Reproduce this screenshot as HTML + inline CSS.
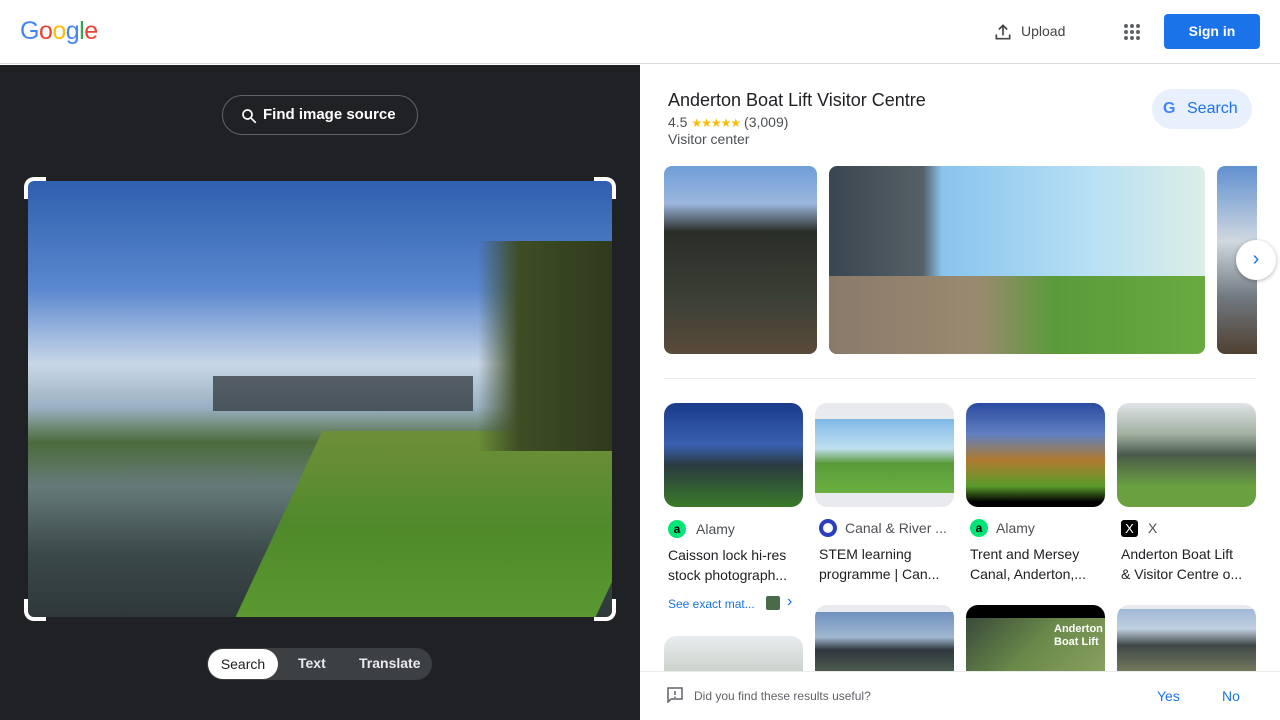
<!DOCTYPE html>
<html><head><meta charset="utf-8"><style>
*{box-sizing:border-box;margin:0;padding:0}
body{width:1280px;height:720px;overflow:hidden;font-family:"Liberation Sans",Arial,sans-serif;background:#fff;position:relative}
.a{position:absolute}
.hdr{left:0;top:0;width:1280px;height:64px;background:#fff;border-bottom:1px solid #dadce0}
.left{left:0;top:65px;width:640px;height:655px;background:#202124}
.img{border-radius:8px;overflow:hidden}
.src{font-size:14px;color:#4d5156}
.ttl{font-size:14px;color:#202124;line-height:20px}
</style></head><body>
<div class="a hdr">
 <div class="a" style="left:20px;top:17px;font-size:25px;letter-spacing:-0.5px"><span style="color:#4285f4">G</span><span style="color:#ea4335">o</span><span style="color:#fbbc05">o</span><span style="color:#4285f4">g</span><span style="color:#34a853">l</span><span style="color:#ea4335">e</span></div>
 <svg class="a" style="left:993px;top:22px" width="20" height="20" viewBox="0 0 24 24"><path d="M12 16V4M7 9l5-5 5 5M4 15v5h16v-5" stroke="#444" stroke-width="2" fill="none"/></svg>
 <div class="a" style="left:1021px;top:23px;font-size:14px;color:#444">Upload</div>
 <svg class="a" style="left:1123px;top:23px" width="18" height="18" viewBox="0 0 18 18" fill="#5f6368"><circle cx="3" cy="3" r="2"/><circle cx="9" cy="3" r="2"/><circle cx="15" cy="3" r="2"/><circle cx="3" cy="9" r="2"/><circle cx="9" cy="9" r="2"/><circle cx="15" cy="9" r="2"/><circle cx="3" cy="15" r="2"/><circle cx="9" cy="15" r="2"/><circle cx="15" cy="15" r="2"/></svg>
 <div class="a" style="left:1164px;top:14px;width:96px;height:35px;background:#1a73e8;border-radius:4px;color:#fff;font-size:14px;font-weight:bold;text-align:center;line-height:35px">Sign in</div>
</div>
<div class="a left">
 <div class="a" style="left:222px;top:30px;width:196px;height:40px;border:1px solid #5f6368;border-radius:20px;color:#fff;font-size:15px;font-weight:bold;line-height:38px;padding-left:40px">Find image source</div>
 <svg class="a" style="left:240px;top:42px" width="18" height="18" viewBox="0 0 24 24"><circle cx="10" cy="10" r="6" stroke="#fff" stroke-width="2.2" fill="none"/><path d="M15 15l6 6" stroke="#fff" stroke-width="2.2"/></svg>
 <div class="a" style="left:28px;top:116px;width:584px;height:436px;background:linear-gradient(180deg,#2f5fae 0%,#5b88cf 25%,#c9d7e8 42%,#9ab0c0 52%,#4b6b3c 60%,#667a7a 70%,#3c4a4a 85%,#2e3838 100%);overflow:hidden">
  <div class="a" style="left:250px;top:250px;width:360px;height:190px;background:linear-gradient(180deg,#6f8f3a,#4f8a2a 50%,#5a9a30);transform:skewX(-25deg)"></div>
  <div class="a" style="left:450px;top:60px;width:134px;height:210px;background:linear-gradient(90deg,rgba(60,75,35,0),#3f4d25 30%,#2f3a1c)"></div>
  <div class="a" style="left:185px;top:195px;width:260px;height:35px;background:#2a2f35;opacity:.7"></div>
 </div>
 <div class="a" style="left:24px;top:112px;width:22px;height:22px;border-left:4px solid #fff;border-top:4px solid #fff;border-top-left-radius:10px"></div>
 <div class="a" style="left:594px;top:112px;width:22px;height:22px;border-right:4px solid #fff;border-top:4px solid #fff;border-top-right-radius:10px"></div>
 <div class="a" style="left:24px;top:534px;width:22px;height:22px;border-left:4px solid #fff;border-bottom:4px solid #fff;border-bottom-left-radius:10px"></div>
 <div class="a" style="left:594px;top:534px;width:22px;height:22px;border-right:4px solid #fff;border-bottom:4px solid #fff;border-bottom-right-radius:10px"></div>
 <div class="a" style="left:207px;top:583px;width:225px;height:32px;background:#3c4043;border-radius:16px"></div>
 <div class="a" style="left:208px;top:584px;width:70px;height:30px;background:#fff;border-radius:15px;font-size:14px;color:#202124;text-align:center;line-height:30px">Search</div>
 <div class="a" style="left:298px;top:590px;font-size:14px;color:#e8eaed;font-weight:bold">Text</div>
 <div class="a" style="left:359px;top:590px;font-size:14px;color:#e8eaed;font-weight:bold">Translate</div>
</div>
<div class="a" style="left:668px;top:90px;font-size:18px;color:#202124">Anderton Boat Lift Visitor Centre</div>
<div class="a" style="left:668px;top:114px;font-size:14px;color:#4d5156">4.5 <span style="color:#fbbc04;font-size:12px;letter-spacing:-1px">★★★★★</span> (3,009)</div>
<div class="a" style="left:668px;top:131px;font-size:14px;color:#4d5156">Visitor center</div>
<div class="a" style="left:1152px;top:89px;width:100px;height:40px;border-radius:20px;background:#e8f0fe"></div>
<div class="a" style="left:1163px;top:100px;font-size:16px;font-weight:bold;color:#4285f4">G</div>
<div class="a" style="left:1187px;top:100px;font-size:16px;color:#1a73e8">Search</div>
<div class="a img" style="left:664px;top:166px;width:153px;height:188px;background:linear-gradient(180deg,#6f9ed8 0%,#9cb6de 20%,#2a2e28 35%,#3a3f35 70%,#5a4a3a 100%)"></div>
<div class="a img" style="left:829px;top:166px;width:376px;height:188px;background:linear-gradient(90deg,#3a4650 0%,#556066 25%,#88c4ee 30%,#b8e0f4 70%,#dceee8 100%)"><div class="a" style="left:0;top:110px;width:376px;height:78px;background:linear-gradient(90deg,#8a7a6a,#9a8a70 40%,#5a9a3a 60%,#6aaa40)"></div></div>
<div class="a" style="left:1217px;top:166px;width:40px;height:188px;border-radius:8px 0 0 8px;background:linear-gradient(180deg,#6090d0,#d0d8e0 40%,#707880 70%,#504030)"></div>
<div class="a" style="left:1236px;top:240px;width:40px;height:40px;border-radius:50%;background:#fff;box-shadow:0 1px 4px rgba(0,0,0,.3);color:#1a73e8;text-align:center;line-height:38px;font-size:20px">›</div>
<div class="a" style="left:664px;top:378px;width:592px;height:1px;background:#e8eaed"></div>
<div class="a img" style="left:664px;top:403px;width:139px;height:104px;border-radius:12px;background:linear-gradient(180deg,#1a3a8a,#3a60b0 40%,#2a3a40 60%,#3a7a2a)"></div>
<div class="a img" style="left:815px;top:403px;width:139px;height:104px;border-radius:12px;background:#e8eaed"><div class="a" style="left:0;top:16px;width:139px;height:74px;background:linear-gradient(180deg,#80b8e8,#c0e0f0 40%,#5a9a3a 60%,#6ab040)"></div></div>
<div class="a img" style="left:966px;top:403px;width:139px;height:104px;border-radius:12px;background:linear-gradient(180deg,#2a4aa0,#6080c0 30%,#b07a30 55%,#5a9a2a 80%,#000 95%)"></div>
<div class="a img" style="left:1117px;top:403px;width:139px;height:104px;border-radius:12px;background:linear-gradient(180deg,#e0e4e8,#a0b0a0 30%,#4a5a4a 50%,#6aa040 80%)"></div>
<div class="a" style="left:668px;top:520px;width:18px;height:18px;border-radius:50%;background:#00e676;font-size:12px;text-align:center;line-height:18px;font-weight:bold">a</div>
<div class="a src" style="left:696px;top:521px">Alamy</div>
<div class="a" style="left:819px;top:519px;width:18px;height:18px;border-radius:50%;border:4px solid #2a3ec0;background:#fff"></div>
<div class="a src" style="left:845px;top:520px">Canal &amp; River ...</div>
<div class="a" style="left:970px;top:519px;width:18px;height:18px;border-radius:50%;background:#00e676;font-size:12px;text-align:center;line-height:18px;font-weight:bold">a</div>
<div class="a src" style="left:996px;top:520px">Alamy</div>
<div class="a" style="left:1121px;top:520px;width:17px;height:17px;border-radius:3px;background:#000;color:#fff;font-size:13px;text-align:center;line-height:17px">X</div>
<div class="a src" style="left:1148px;top:520px">X</div>
<div class="a ttl" style="left:668px;top:545px">Caisson lock hi-res<br>stock photograph...</div>
<div class="a ttl" style="left:819px;top:544px">STEM learning<br>programme | Can...</div>
<div class="a ttl" style="left:970px;top:544px">Trent and Mersey<br>Canal, Anderton,...</div>
<div class="a ttl" style="left:1121px;top:544px">Anderton Boat Lift<br>&amp; Visitor Centre o...</div>
<div class="a" style="left:668px;top:597px;font-size:12px;color:#1a73e8">See exact mat...</div>
<div class="a" style="left:766px;top:596px;width:14px;height:14px;border-radius:2px;background:#4a6a4a"></div>
<div class="a" style="left:787px;top:593px;font-size:16px;color:#1a73e8">›</div>
<div class="a img" style="left:664px;top:636px;width:139px;height:40px;border-radius:12px 12px 0 0;background:linear-gradient(180deg,#e8ecf0,#c8d0c8)"></div>
<div class="a img" style="left:815px;top:605px;width:139px;height:70px;border-radius:12px 12px 0 0;background:#e8eaed"><div class="a" style="left:0;top:7px;width:139px;height:63px;background:linear-gradient(180deg,#7090c0,#a0b8d0 40%,#303840 60%,#506050)"></div></div>
<div class="a img" style="left:966px;top:605px;width:139px;height:70px;border-radius:12px 12px 0 0;background:#000"><div class="a" style="left:0;top:13px;width:139px;height:57px;background:linear-gradient(135deg,#3a4a3a,#6a8a4a 50%,#8aa060)"></div><div class="a" style="left:88px;top:18px;color:#fff;font-size:11px;font-weight:bold;line-height:13px">Anderton<br>Boat Lift</div></div>
<div class="a img" style="left:1117px;top:605px;width:139px;height:70px;border-radius:12px 12px 0 0;background:#e8eaed"><div class="a" style="left:0;top:4px;width:139px;height:66px;background:linear-gradient(180deg,#a0b8d8,#c0d0e0 30%,#404848 55%,#7a8060)"></div></div>
<div class="a" style="left:640px;top:671px;width:640px;height:49px;background:#fff;border-top:1px solid #ebebeb"></div>
<svg class="a" style="left:667px;top:687px" width="16" height="16" viewBox="0 0 16 16"><path d="M1 1h14v11H4l-3 3z" stroke="#5f6368" stroke-width="1.5" fill="none"/><path d="M8 4v4M8 9.5v1.5" stroke="#5f6368" stroke-width="1.5"/></svg>
<div class="a" style="left:694px;top:689px;font-size:12px;color:#5f6368">Did you find these results useful?</div>
<div class="a" style="left:1157px;top:688px;font-size:14px;color:#1a73e8">Yes</div>
<div class="a" style="left:1222px;top:688px;font-size:14px;color:#1a73e8">No</div>
</body></html>
